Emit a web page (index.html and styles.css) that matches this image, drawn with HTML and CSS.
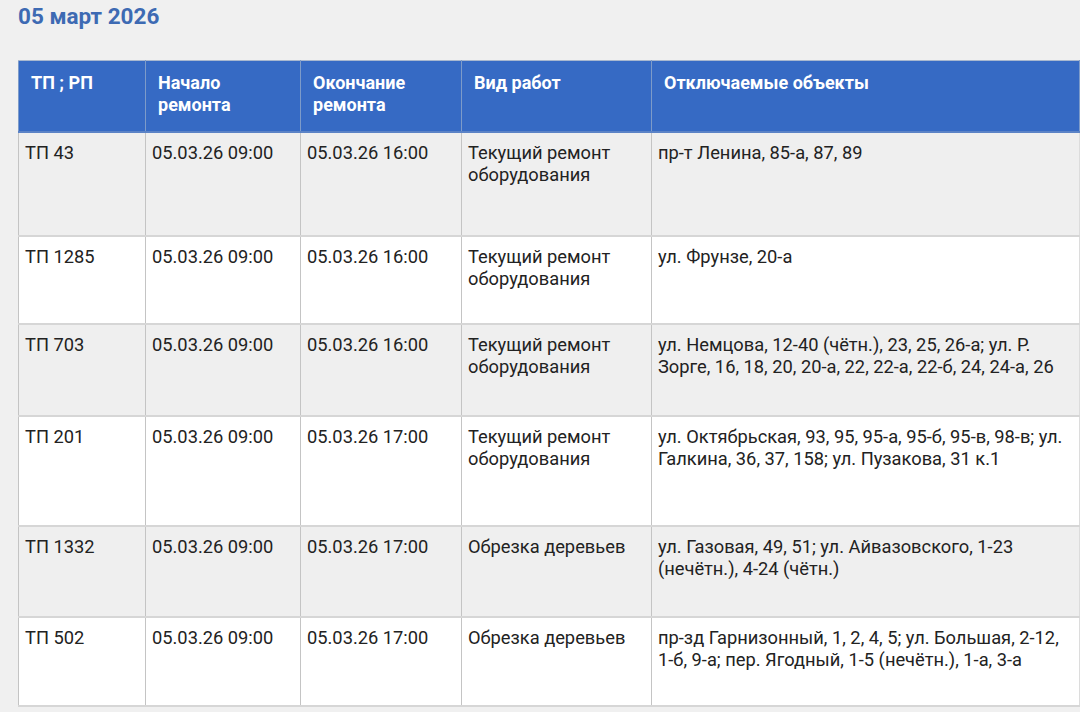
FILE: index.html
```html
<!DOCTYPE html>
<html lang="ru">
<head>
<meta charset="utf-8">
<title>Отключения 05 март 2026</title>
<link rel="stylesheet" href="styles.css">
</head>
<body>
<div class="page">
  <h2 class="date-title">05 март 2026</h2>
  <table class="outages">
    <colgroup>
      <col class="c1"><col class="c2"><col class="c3"><col class="c4"><col class="c5">
    </colgroup>
    <thead>
      <tr>
        <th>ТП ; РП</th>
        <th>Начало ремонта</th>
        <th>Окончание ремонта</th>
        <th>Вид работ</th>
        <th>Отключаемые объекты</th>
      </tr>
    </thead>
    <tbody>
      <tr class="r1">
        <td>ТП 43</td>
        <td>05.03.26 09:00</td>
        <td>05.03.26 16:00</td>
        <td>Текущий ремонт оборудования</td>
        <td>пр-т Ленина, 85-а, 87, 89</td>
      </tr>
      <tr class="r2">
        <td>ТП 1285</td>
        <td>05.03.26 09:00</td>
        <td>05.03.26 16:00</td>
        <td>Текущий ремонт оборудования</td>
        <td>ул. Фрунзе, 20-а</td>
      </tr>
      <tr class="r3">
        <td>ТП 703</td>
        <td>05.03.26 09:00</td>
        <td>05.03.26 16:00</td>
        <td>Текущий ремонт оборудования</td>
        <td>ул. Немцова, 12-40 (чётн.), 23, 25, 26-а; ул. Р. Зорге, 16, 18, 20, 20-а, 22, 22-а, 22-б, 24, 24-а, 26</td>
      </tr>
      <tr class="r4">
        <td>ТП 201</td>
        <td>05.03.26 09:00</td>
        <td>05.03.26 17:00</td>
        <td>Текущий ремонт оборудования</td>
        <td>ул. Октябрьская, 93, 95, 95-а, 95-б, 95-в, 98-в; ул. Галкина, 36, 37, 158; ул. Пузакова, 31 к.1</td>
      </tr>
      <tr class="r5">
        <td>ТП 1332</td>
        <td>05.03.26 09:00</td>
        <td>05.03.26 17:00</td>
        <td>Обрезка деревьев</td>
        <td>ул. Газовая, 49, 51; ул. Айвазовского, 1-23 (нечётн.), 4-24 (чётн.)</td>
      </tr>
      <tr class="r6">
        <td>ТП 502</td>
        <td>05.03.26 09:00</td>
        <td>05.03.26 17:00</td>
        <td>Обрезка деревьев</td>
        <td>пр-зд Гарнизонный, 1, 2, 4, 5; ул. Большая, 2-12, <span class="nb">1-б,</span> 9-а; пер. Ягодный, 1-5 (нечётн.), 1-а, 3-а</td>
      </tr>
    </tbody>
  </table>
</div>
</body>
</html>
```

FILE: styles.css
```css
html, body {
  margin: 0;
  padding: 0;
  background: #f0f0f0;
  overflow: hidden;
}

.page {
  padding: 0 0 0 18px;
  font-family: Roboto, "Noto Sans", "Liberation Sans", sans-serif;
  color: #222222;
}

.date-title {
  margin: 0;
  padding-top: 2px;
  height: 58px;
  font-size: 22.5px;
  line-height: 28px;
  font-weight: 700;
  color: #3d6ab3;
}

.outages {
  border-collapse: collapse;
  table-layout: fixed;
  width: 1061px;
  font-size: 18.3px;
  line-height: 22px;
}

.c1 { width: 127px; }
.c2 { width: 155px; }
.c3 { width: 161px; }
.c4 { width: 190px; }
.c5 { width: 428px; }

.outages th {
  background: #366ac4;
  color: #ffffff;
  font-weight: 700;
  font-size: 18px;
  text-align: left;
  vertical-align: top;
  height: 71px;
  box-sizing: border-box;
  padding: 11px 10px 0 12px;
  border: 1px solid #7d9bc9;
  border-top-color: #a9b8cf;
  border-bottom: 2px solid #5b83c6;
}

.outages td {
  vertical-align: top;
  padding: 9px 6px 0 6px;
  border-left: 1px solid #c4c4c4;
  border-right: 1px solid #c4c4c4;
  border-bottom: 2px solid #d6d6d6;
  box-sizing: border-box;
}

.outages tbody tr:nth-child(odd) td { background: #efefef; }
.outages tbody tr:nth-child(even) td { background: #ffffff; }

.outages td:last-child { border-right-color: #dcdcdc; }

.nb { white-space: nowrap; }

.r1 td { height: 104px; }
.r2 td { height: 88px; }
.r3 td { height: 92px; }
.r4 td { height: 110px; }
.r5 td { height: 91px; }
.r6 td { height: 89px; }
```
